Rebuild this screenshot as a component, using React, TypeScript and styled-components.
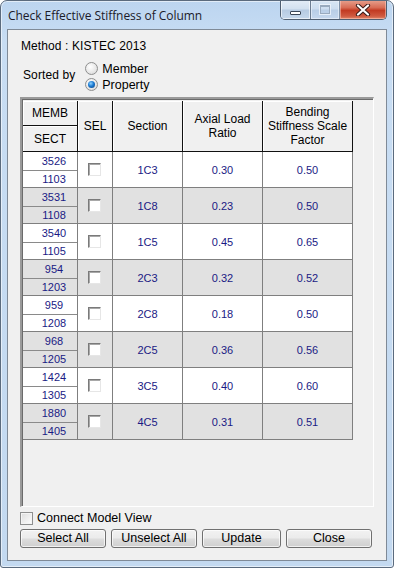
import React from 'react';
import styled, {createGlobalStyle} from "styled-components";

const GlobalStyle = createGlobalStyle`
  html, body {
    margin: 0;
    padding: 0;
    background: #ffffff;
  }
  body {
    font-family: "Liberation Sans", Arial, sans-serif;
  }
`

type Row = {memb: string; sect: string; section: string; axial: string; bending: string};

const rows: Row[] = [
    {memb: "3526", sect: "1103", section: "1C3", axial: "0.30", bending: "0.50"},
    {memb: "3531", sect: "1108", section: "1C8", axial: "0.23", bending: "0.50"},
    {memb: "3540", sect: "1105", section: "1C5", axial: "0.45", bending: "0.65"},
    {memb: "954", sect: "1203", section: "2C3", axial: "0.32", bending: "0.52"},
    {memb: "959", sect: "1208", section: "2C8", axial: "0.18", bending: "0.50"},
    {memb: "968", sect: "1205", section: "2C5", axial: "0.36", bending: "0.56"},
    {memb: "1424", sect: "1305", section: "3C5", axial: "0.40", bending: "0.60"},
    {memb: "1880", sect: "1405", section: "4C5", axial: "0.31", bending: "0.51"},
];

const COLS = [55, 35, 70, 80, 90];
const TABLE_W = COLS.reduce((a, b) => a + b, 0);

export default function App() {
    return (
        <>
            <GlobalStyle/>
            <Window>
                <TitleBar>
                    <Title>Check Effective Stiffness of Column</Title>
                    <CaptionGroup>
                        <CaptionButton w={29}>
                            <MinGlyph/>
                        </CaptionButton>
                        <CaptionButton w={28} disabled>
                            <MaxGlyph/>
                        </CaptionButton>
                        <CloseButton>
                            <svg width="16" height="12" viewBox="0 0 16 12">
                                <path d="M3 1.5 L13 10.5 M13 1.5 L3 10.5" stroke="#3b1d1a" strokeWidth="4.2"
                                      strokeLinecap="round"/>
                                <path d="M3 1.5 L13 10.5 M13 1.5 L3 10.5" stroke="#ffffff" strokeWidth="2.2"
                                      strokeLinecap="round"/>
                            </svg>
                        </CloseButton>
                    </CaptionGroup>
                </TitleBar>

                <Client>
                    <MethodLine>Method : KISTEC 2013</MethodLine>

                    <SortRow>
                        <SortLabel>Sorted by</SortLabel>
                        <RadioGroup>
                            <RadioOption>
                                <Radio/>
                                <span>Member</span>
                            </RadioOption>
                            <RadioOption>
                                <Radio checked/>
                                <span>Property</span>
                            </RadioOption>
                        </RadioGroup>
                    </SortRow>

                    <GridFrame>
                        <HeaderRow>
                            <HeaderStack>
                                <HeaderCell w={COLS[0]} h={25}>MEMB</HeaderCell>
                                <HeaderCell w={COLS[0]} h={26}>SECT</HeaderCell>
                            </HeaderStack>
                            <HeaderCell w={COLS[1]} h={51}>SEL</HeaderCell>
                            <HeaderCell w={COLS[2]} h={51}>Section</HeaderCell>
                            <HeaderCell w={COLS[3]} h={51}>Axial Load<br/>Ratio</HeaderCell>
                            <HeaderCell w={COLS[4]} h={51}>Bending<br/>Stiffness Scale<br/>Factor</HeaderCell>
                        </HeaderRow>

                        {rows.map((r, i) => (
                            <DataRow key={r.memb} shaded={i % 2 === 1}>
                                <MembStack w={COLS[0]}>
                                    <MembCell top>{r.memb}</MembCell>
                                    <MembCell>{r.sect}</MembCell>
                                </MembStack>
                                <DataCell w={COLS[1]}>
                                    <CellCheck/>
                                </DataCell>
                                <DataCell w={COLS[2]}>{r.section}</DataCell>
                                <DataCell w={COLS[3]}>{r.axial}</DataCell>
                                <DataCell w={COLS[4]}>{r.bending}</DataCell>
                            </DataRow>
                        ))}
                    </GridFrame>

                    <ConnectRow>
                        <WinCheck/>
                        <span>Connect Model View</span>
                    </ConnectRow>

                    <ButtonRow>
                        <PushButton>Select All</PushButton>
                        <PushButton>Unselect All</PushButton>
                        <PushButton>Update</PushButton>
                        <PushButton>Close</PushButton>
                    </ButtonRow>
                </Client>
            </Window>
        </>
    )
}

const Window = styled.div`
  width: 394px;
  height: 568px;
  box-sizing: border-box;
  border: 1px solid #5b6b7e;
  border-radius: 7px 7px 3px 3px;
  background: linear-gradient(180deg, #bcd5f0 0%, #c8ddf3 40px, #c3d9f0 100%);
  box-shadow: inset 0 0 0 1px rgba(255, 255, 255, 0.55);
  display: flex;
  flex-direction: column;
  padding: 0 6px 6px 6px;
  overflow: hidden;
`

const TitleBar = styled.div`
  height: 28px;
  display: flex;
  align-items: flex-start;
  justify-content: space-between;
`

const Title = styled.div`
  font-family: "Open Sans", "Liberation Sans", sans-serif;
  font-size: 12px;
  color: #1b1b2a;
  padding: 6px 0 0 1px;
  letter-spacing: -0.05px;
`

const CaptionGroup = styled.div`
  display: flex;
  margin-top: -1px;
  height: 20px;
  border: 1px solid #4f5e70;
  border-top: none;
  border-radius: 0 0 5px 5px;
  overflow: hidden;
  box-sizing: border-box;
`

const CaptionButton = styled.div<{w: number; disabled?: boolean}>`
  width: ${p => p.w}px;
  height: 100%;
  display: flex;
  align-items: center;
  justify-content: center;
  background: linear-gradient(180deg, #e4edf7 0%, #d3e1f0 45%, #b7cbe2 55%, #c6d8ec 100%);
  border-right: 1px solid #6d7e92;
  box-shadow: inset 0 0 0 1px rgba(255, 255, 255, 0.6);
  opacity: ${p => (p.disabled ? 0.75 : 1)};
`

const MinGlyph = styled.div`
  width: 9px;
  height: 2px;
  margin-top: 6px;
  background: #ffffff;
  border: 1px solid #3a4656;
  border-radius: 1px;
`

const MaxGlyph = styled.div`
  width: 8px;
  height: 6px;
  border: 1px solid #8d9bad;
  border-top-width: 2px;
  box-shadow: 0 0 0 1px rgba(255, 255, 255, 0.8);
`

const CloseButton = styled.div`
  width: 46px;
  height: 100%;
  display: flex;
  align-items: center;
  justify-content: center;
  background: linear-gradient(180deg, #e8a390 0%, #d86c55 40%, #c23a22 55%, #cf5a40 85%, #e2886a 100%);
  box-shadow: inset 0 0 0 1px rgba(255, 210, 200, 0.5);
`

const Client = styled.div`
  flex: 1;
  display: flex;
  flex-direction: column;
  background: #f0f0f0;
  border: 1px solid #7f8a97;
  font-family: "Liberation Sans", Arial, sans-serif;
  font-size: 12px;
  color: #000;
`

const MethodLine = styled.div`
  margin: 9px 0 0 13px;
  line-height: 14px;
  letter-spacing: 0.1px;
`

const SortRow = styled.div`
  display: flex;
  align-items: center;
  margin: 9px 0 0 15px;
`

const SortLabel = styled.span`
  letter-spacing: 0.1px;
  padding-bottom: 3px;
`

const RadioGroup = styled.div`
  display: flex;
  flex-direction: column;
  gap: 3px;
  margin-left: 10px;
`

const RadioOption = styled.label`
  display: flex;
  align-items: center;
  gap: 4px;
  height: 13px;
  font-size: 12.5px;
`

const Radio = styled.span<{checked?: boolean}>`
  width: 13px;
  height: 13px;
  box-sizing: border-box;
  border-radius: 50%;
  border: 1px solid #8e8f8f;
  background: radial-gradient(circle at 40% 35%, #ffffff 0%, #e6e6e6 60%, #cfcfcf 100%);
  display: flex;
  align-items: center;
  justify-content: center;

  &::after {
    content: "";
    display: ${p => (p.checked ? "block" : "none")};
    width: 7px;
    height: 7px;
    border-radius: 50%;
    background: radial-gradient(circle at 40% 35%, #8fd2ff 0%, #1b7ad1 45%, #0d3f7c 100%);
  }
`

const GridFrame = styled.div`
  margin: 6px 0 0 12px;
  width: 354px;
  height: 410px;
  box-sizing: border-box;
  border-style: solid;
  border-width: 2px 1px 1px 2px;
  border-color: #9a9a9a #ffffff #ffffff #9a9a9a;
  box-shadow: inset 1px 1px 0 #6b6b6b;
  padding: 2px 0 0 1px;
  background: #f0f0f0;
`

const HeaderRow = styled.div`
  display: flex;
  width: ${TABLE_W}px;
`

const HeaderStack = styled.div`
  display: flex;
  flex-direction: column;
`

const HeaderCell = styled.div<{w: number; h: number}>`
  width: ${p => p.w}px;
  height: ${p => p.h}px;
  box-sizing: border-box;
  display: flex;
  align-items: center;
  justify-content: center;
  text-align: center;
  line-height: 14px;
  font-size: 12px;
  background: #f0f0f0;
  border-right: 1px solid #111;
  border-bottom: 1px solid #111;
  box-shadow: inset 1px 1px 0 #ffffff;
`

const DataRow = styled.div<{shaded: boolean}>`
  display: flex;
  width: ${TABLE_W}px;
  height: 36px;
  background: ${p => (p.shaded ? "#e1e1e1" : "#ffffff")};
  font-size: 11px;
  color: #1a1a84;
`

const DataCell = styled.div<{w: number}>`
  width: ${p => p.w}px;
  box-sizing: border-box;
  display: flex;
  align-items: center;
  justify-content: center;
  border-right: 1px solid #7f7f7f;
  border-bottom: 1px solid #7f7f7f;
`

const MembStack = styled.div<{w: number}>`
  width: ${p => p.w}px;
  box-sizing: border-box;
  display: flex;
  flex-direction: column;
  border-right: 1px solid #7f7f7f;
  border-bottom: 1px solid #7f7f7f;
`

const MembCell = styled.div<{top?: boolean}>`
  height: ${p => (p.top ? 19 : 16)}px;
  box-sizing: border-box;
  display: flex;
  align-items: center;
  justify-content: center;
  padding-left: 8px;
  border-bottom: ${p => (p.top ? "1px solid #8a8a8a" : "none")};
`

const CellCheck = styled.span`
  width: 13px;
  height: 13px;
  box-sizing: border-box;
  margin-left: -1px;
  background: #ffffff;
  border-style: solid;
  border-width: 1px;
  border-color: #7a7a7a #e6e6e6 #e6e6e6 #7a7a7a;
  box-shadow: inset 1px 1px 0 #a8a8a8;
`

const ConnectRow = styled.label`
  display: flex;
  align-items: center;
  gap: 4px;
  margin: 4px 0 0 12px;
  height: 14px;
  font-size: 12.5px;
`

const WinCheck = styled.span`
  width: 13px;
  height: 13px;
  box-sizing: border-box;
  border: 1px solid #8e8f8f;
  background: linear-gradient(135deg, #dcdcdc 0%, #f4f4f4 70%, #ffffff 100%);
  box-shadow: inset 0 0 0 1px #f4f4f4;
`

const ButtonRow = styled.div`
  display: flex;
  gap: 5px;
  margin: 4px 0 0 12px;
`

const PushButton = styled.button`
  width: 86px;
  height: 19px;
  padding: 0;
  box-sizing: border-box;
  border: 1px solid #707070;
  border-radius: 3px;
  background: linear-gradient(180deg, #f2f2f2 0%, #ebebeb 48%, #dddddd 52%, #cfcfcf 100%);
  box-shadow: inset 0 0 0 1px rgba(255, 255, 255, 0.7);
  font-family: "Liberation Sans", Arial, sans-serif;
  font-size: 12.5px;
  color: #000;
  line-height: 15px;

  &:nth-child(3) {
    width: 79px;
  }
`
